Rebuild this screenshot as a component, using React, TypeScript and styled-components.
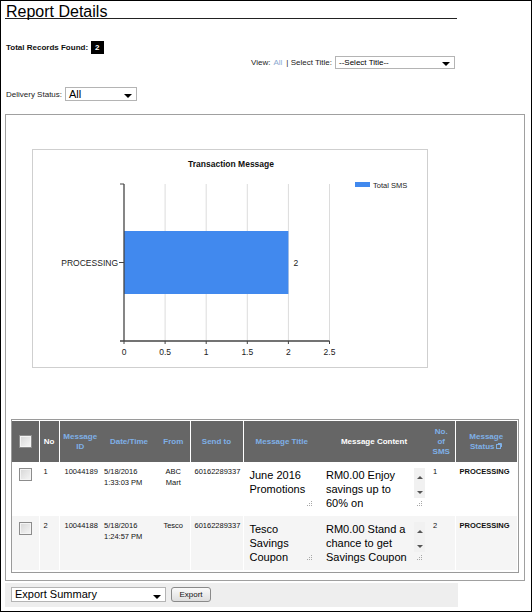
import React from "react";
import styled, { createGlobalStyle } from "styled-components";

const GlobalStyle = createGlobalStyle`
  html, body {
    margin: 0;
    padding: 0;
    background: #fff;
  }
  body {
    font-family: "Liberation Sans", Arial, sans-serif;
    color: #000;
  }
`;

const Page = styled.div`
  box-sizing: border-box;
  width: 532px;
  height: 612px;
  border: 1px solid #000;
  padding: 3px 0 0 4px;
  overflow: hidden;
`;

const Title = styled.h1`
  margin: 0;
  box-sizing: border-box;
  width: 452px;
  height: 15px;
  padding-left: 1px;
  font-size: 16px;
  font-weight: normal;
  line-height: 16px;
  white-space: nowrap;
  border-bottom: 1px solid #222;
`;

const Filters = styled.div`
  width: 450px;
  font-size: 8px;
  color: #222;
`;

const TotalRow = styled.div`
  display: flex;
  align-items: center;
  height: 13px;
  margin-top: 22px;
  padding-left: 1px;
  font-weight: bold;
  color: #111;
`;

const Badge = styled.span`
  height: 13px;
  line-height: 13px;
  padding: 0 4px;
  margin-left: 3px;
  background: #000;
  color: #fff;
`;

const ViewRow = styled.div`
  display: flex;
  justify-content: flex-end;
  align-items: center;
  height: 13px;
  margin-top: 2px;
`;

const DeliveryRow = styled.div`
  display: flex;
  align-items: center;
  height: 14px;
  margin-top: 18px;
  padding-left: 1px;
`;

const Muted = styled.span`
  color: #8aa9cf;
  margin: 0 4px 0 3px;
`;

const Select = styled.div<{ $w: number; $h: number; $fs: number }>`
  position: relative;
  box-sizing: border-box;
  width: ${(p) => p.$w}px;
  height: ${(p) => p.$h}px;
  margin-left: 3px;
  padding-left: 3px;
  border: 1px solid #b4b4b4;
  background: #fff;
  color: #000;
  font-size: ${(p) => p.$fs}px;
  line-height: ${(p) => p.$h - 2}px;
  white-space: nowrap;

  &::after {
    content: "";
    position: absolute;
    right: 4px;
    bottom: 2px;
    border-left: 4px solid transparent;
    border-right: 4px solid transparent;
    border-top: 4px solid #000;
  }
`;

const Panel = styled.div`
  box-sizing: border-box;
  width: 520px;
  height: 467px;
  margin-top: 13px;
  padding: 34px 5px 0 0;
  border: 1px solid #a0a0a0;
`;

const ChartBox = styled.div`
  box-sizing: border-box;
  width: 396px;
  height: 219px;
  margin-left: 26px;
  border: 1px solid #cfcfcf;
  background: #fff;
`;

const TableFrame = styled.div`
  box-sizing: border-box;
  width: 508px;
  height: 154px;
  margin: 51px 0 0 5px;
  padding: 1px 1px 2px 0;
  border: 1px solid #9a9a9a;
`;

const Table = styled.table`
  width: 505px;
  border-collapse: collapse;
  table-layout: fixed;
`;

const HeadRow = styled.tr`
  height: 41px;
`;

const HeadCell = styled.th<{ $sep?: boolean; $plain?: boolean }>`
  padding: 0 2px;
  background: #666;
  color: ${(p) => (p.$plain ? "#fff" : "#7fb0e6")};
  font-size: 8px;
  font-weight: bold;
  line-height: 10px;
  text-align: center;
  vertical-align: middle;
  border-right: ${(p) => (p.$sep ? "1px solid #fff" : "none")};
`;

const Row = styled.tr<{ $alt?: boolean }>`
  height: 54px;
  background: ${(p) => (p.$alt ? "#f5f5f5" : "#fff")};
`;

const Cell = styled.td<{ $sep?: boolean; $center?: boolean; $bold?: boolean; $pl?: number }>`
  padding: 4px 1px 0 ${(p) => p.$pl ?? 4}px;
  vertical-align: top;
  font-size: 7.5px;
  line-height: 11px;
  color: #111;
  white-space: nowrap;
  font-weight: ${(p) => (p.$bold ? "bold" : "normal")};
  text-align: ${(p) => (p.$center ? "center" : "left")};
  border-right: ${(p) => (p.$sep ? "1px solid #fff" : "none")};
`;

const Check = styled.span<{ $head?: boolean }>`
  display: block;
  box-sizing: border-box;
  width: 13px;
  height: 13px;
  margin: ${(p) => (p.$head ? "0 auto" : "2px auto 0")};
  border: 1px solid #8c8c8c;
  box-shadow: inset 0 0 0 1px #f4f4f4;
  background: linear-gradient(135deg, #d6d6d6, #f6f6f6);
`;

const TextBox = styled.div<{ $w: number }>`
  position: relative;
  box-sizing: border-box;
  display: flex;
  width: ${(p) => p.$w}px;
  height: 44px;
  padding: 2px 0 0 4px;
  font-size: 11px;
  line-height: 14px;
  color: #000;
  white-space: normal;
`;

const BoxText = styled.div<{ $w: number }>`
  width: ${(p) => p.$w}px;
  height: 42px;
`;

const ScrollCol = styled.div`
  display: flex;
  flex-direction: column;
  justify-content: space-between;
  align-items: center;
  width: 11px;
  height: 30px;
  margin-left: auto;
  padding: 8px 0 4px;
  box-sizing: border-box;
  background: #f1f1f1;
`;

const ArrowUp = styled.span`
  border-left: 3px solid transparent;
  border-right: 3px solid transparent;
  border-bottom: 3px solid #555;
`;

const ArrowDown = styled.span`
  border-left: 3px solid transparent;
  border-right: 3px solid transparent;
  border-top: 3px solid #555;
`;

const GripSpot = styled.span<{ $right: number }>`
  position: absolute;
  right: ${(p) => p.$right}px;
  bottom: 3px;
  line-height: 0;
`;

const Footer = styled.div`
  box-sizing: border-box;
  display: flex;
  align-items: flex-start;
  width: 453px;
  height: 24px;
  margin-top: 2px;
  padding: 4px 0 0 3px;
  background: #eeeeee;
`;

const Button = styled.button`
  box-sizing: border-box;
  width: 40px;
  height: 15px;
  margin-left: 5px;
  padding: 0;
  border: 1px solid #8a8a8a;
  border-radius: 3px;
  background: linear-gradient(#fafafa, #dedede);
  font-family: "Liberation Sans", Arial, sans-serif;
  font-size: 8px;
  color: #111;
`;

function Grip({ right }: { right: number }) {
  return (
    <GripSpot $right={right}>
      <svg width="6" height="6" viewBox="0 0 6 6">
        {[
          [4, 0],
          [2, 2],
          [4, 2],
          [0, 4],
          [2, 4],
          [4, 4],
        ].map(([x, y]) => (
          <rect key={`${x}-${y}`} x={x} y={y} width="1" height="1" fill="#a8a8a8" />
        ))}
      </svg>
    </GripSpot>
  );
}

function StatusIcon() {
  return (
    <svg width="6" height="6" viewBox="0 0 6 6" style={{ marginLeft: 2 }}>
      <rect x="0.5" y="1.5" width="4" height="4" fill="none" stroke="#7fb0e6" />
      <path d="M2 0.5h3.5V4" fill="none" stroke="#7fb0e6" />
    </svg>
  );
}

function Chart() {
  const x0 = 91;
  const unit = 82.2;
  const grid = [0.5, 1, 1.5, 2, 2.5];
  const ticks = [0, 0.5, 1, 1.5, 2, 2.5];
  const axisY = 191;
  return (
    <svg width="394" height="217" viewBox="0 0 394 217" fontFamily="Liberation Sans, Arial, sans-serif">
      <text x="198" y="17" textAnchor="middle" fontSize="8.5" fontWeight="bold" fill="#111">
        Transaction Message
      </text>
      <rect x="322" y="32" width="15" height="5" fill="#4189ee" />
      <text x="340" y="37.5" fontSize="7.5" fill="#222">
        Total SMS
      </text>
      {grid.map((g) => (
        <line key={g} x1={x0 + g * unit} y1="34" x2={x0 + g * unit} y2={axisY} stroke="#dcdcdc" strokeWidth="1" />
      ))}
      <rect x={x0} y="81" width={2 * unit} height="63" fill="#4189ee" />
      <line x1={x0} y1="34" x2={x0} y2={axisY} stroke="#444" strokeWidth="1.3" />
      <line x1={x0 - 4} y1="34" x2={x0} y2="34" stroke="#444" strokeWidth="1" />
      <line x1={x0 - 4} y1={axisY} x2={x0 + 2.5 * unit} y2={axisY} stroke="#444" strokeWidth="1.3" />
      {ticks.map((t) => (
        <line key={t} x1={x0 + t * unit} y1={axisY} x2={x0 + t * unit} y2={axisY + 3} stroke="#444" strokeWidth="1" />
      ))}
      <line x1={x0 - 5} y1="112.5" x2={x0} y2="112.5" stroke="#444" strokeWidth="1" />
      <text x={x0 - 6} y="115.5" textAnchor="end" fontSize="8.5" fill="#222">
        PROCESSING
      </text>
      <text x={x0 + 2 * unit + 5} y="115.5" fontSize="8.5" fill="#222">
        2
      </text>
      {ticks.map((t) => (
        <text key={t} x={x0 + t * unit} y="205" textAnchor="middle" fontSize="8.5" fill="#222">
          {t}
        </text>
      ))}
    </svg>
  );
}

type Msg = {
  no: number;
  id: string;
  date: string;
  time: string;
  from: string;
  to: string;
  title: string;
  content: string;
  sms: number;
  status: string;
};

const rows: Msg[] = [
  {
    no: 1,
    id: "10044189",
    date: "5/18/2016",
    time: "1:33:03 PM",
    from: "ABC Mart",
    to: "60162289337",
    title: "June 2016 Promotions",
    content: "RM0.00 Enjoy savings up to 60% on",
    sms: 1,
    status: "PROCESSING",
  },
  {
    no: 2,
    id: "10044188",
    date: "5/18/2016",
    time: "1:24:57 PM",
    from: "Tesco",
    to: "60162289337",
    title: "Tesco Savings Coupon",
    content: "RM0.00 Stand a chance to get Savings Coupon",
    sms: 2,
    status: "PROCESSING",
  },
];

const colWidths = [27, 20, 42, 56, 33, 53, 77, 108, 27, 62];

export default function App() {
  return (
    <>
      <GlobalStyle />
      <Page>
        <Title>Report Details</Title>

        <Filters>
          <TotalRow>
            Total Records Found:
            <Badge>2</Badge>
          </TotalRow>

          <ViewRow>
            View:
            <Muted>All</Muted>| Select Title:
            <Select $w={120} $h={13} $fs={8}>
              --Select Title--
            </Select>
          </ViewRow>

          <DeliveryRow>
            Delivery Status:
            <Select $w={72} $h={14} $fs={11}>
              All
            </Select>
          </DeliveryRow>
        </Filters>

        <Panel>
          <ChartBox>
            <Chart />
          </ChartBox>

          <TableFrame>
            <Table>
              <colgroup>
                {colWidths.map((w, i) => (
                  <col key={i} style={{ width: w }} />
                ))}
              </colgroup>
              <thead>
                <HeadRow>
                  <HeadCell $sep>
                    <Check $head />
                  </HeadCell>
                  <HeadCell $sep $plain>
                    No
                  </HeadCell>
                  <HeadCell>
                    Message
                    <br />
                    ID
                  </HeadCell>
                  <HeadCell>Date/Time</HeadCell>
                  <HeadCell $sep>From</HeadCell>
                  <HeadCell $sep>Send to</HeadCell>
                  <HeadCell>Message Title</HeadCell>
                  <HeadCell $plain>Message Content</HeadCell>
                  <HeadCell $sep>
                    No.
                    <br />
                    of
                    <br />
                    SMS
                  </HeadCell>
                  <HeadCell>
                    Message
                    <br />
                    Status
                    <StatusIcon />
                  </HeadCell>
                </HeadRow>
              </thead>
              <tbody>
                {rows.map((r, i) => (
                  <Row key={r.id} $alt={i % 2 === 1}>
                    <Cell $sep $pl={2}>
                      <Check />
                    </Cell>
                    <Cell $sep>{r.no}</Cell>
                    <Cell $pl={5}>{r.id}</Cell>
                    <Cell $pl={3}>
                      {r.date}
                      <br />
                      {r.time}
                    </Cell>
                    <Cell $sep $center $pl={1}>
                      {r.from.split(" ").map((w, k) => (
                        <React.Fragment key={k}>
                          {k > 0 && <br />}
                          {w}
                        </React.Fragment>
                      ))}
                    </Cell>
                    <Cell $sep>{r.to}</Cell>
                    <Cell $pl={2}>
                      <TextBox $w={70}>
                        <BoxText $w={62}>{r.title}</BoxText>
                        <Grip right={3} />
                      </TextBox>
                    </Cell>
                    <Cell $pl={2}>
                      <TextBox $w={103}>
                        <BoxText $w={88}>{r.content}</BoxText>
                        <ScrollCol>
                          <ArrowUp />
                          <ArrowDown />
                        </ScrollCol>
                        <Grip right={2} />
                      </TextBox>
                    </Cell>
                    <Cell $sep $pl={5}>
                      {r.sms}
                    </Cell>
                    <Cell $bold>{r.status}</Cell>
                  </Row>
                ))}
              </tbody>
            </Table>
          </TableFrame>
        </Panel>

        <Footer>
          <Select $w={155} $h={15} $fs={11}>
            Export Summary
          </Select>
          <Button>Export</Button>
        </Footer>
      </Page>
    </>
  );
}
